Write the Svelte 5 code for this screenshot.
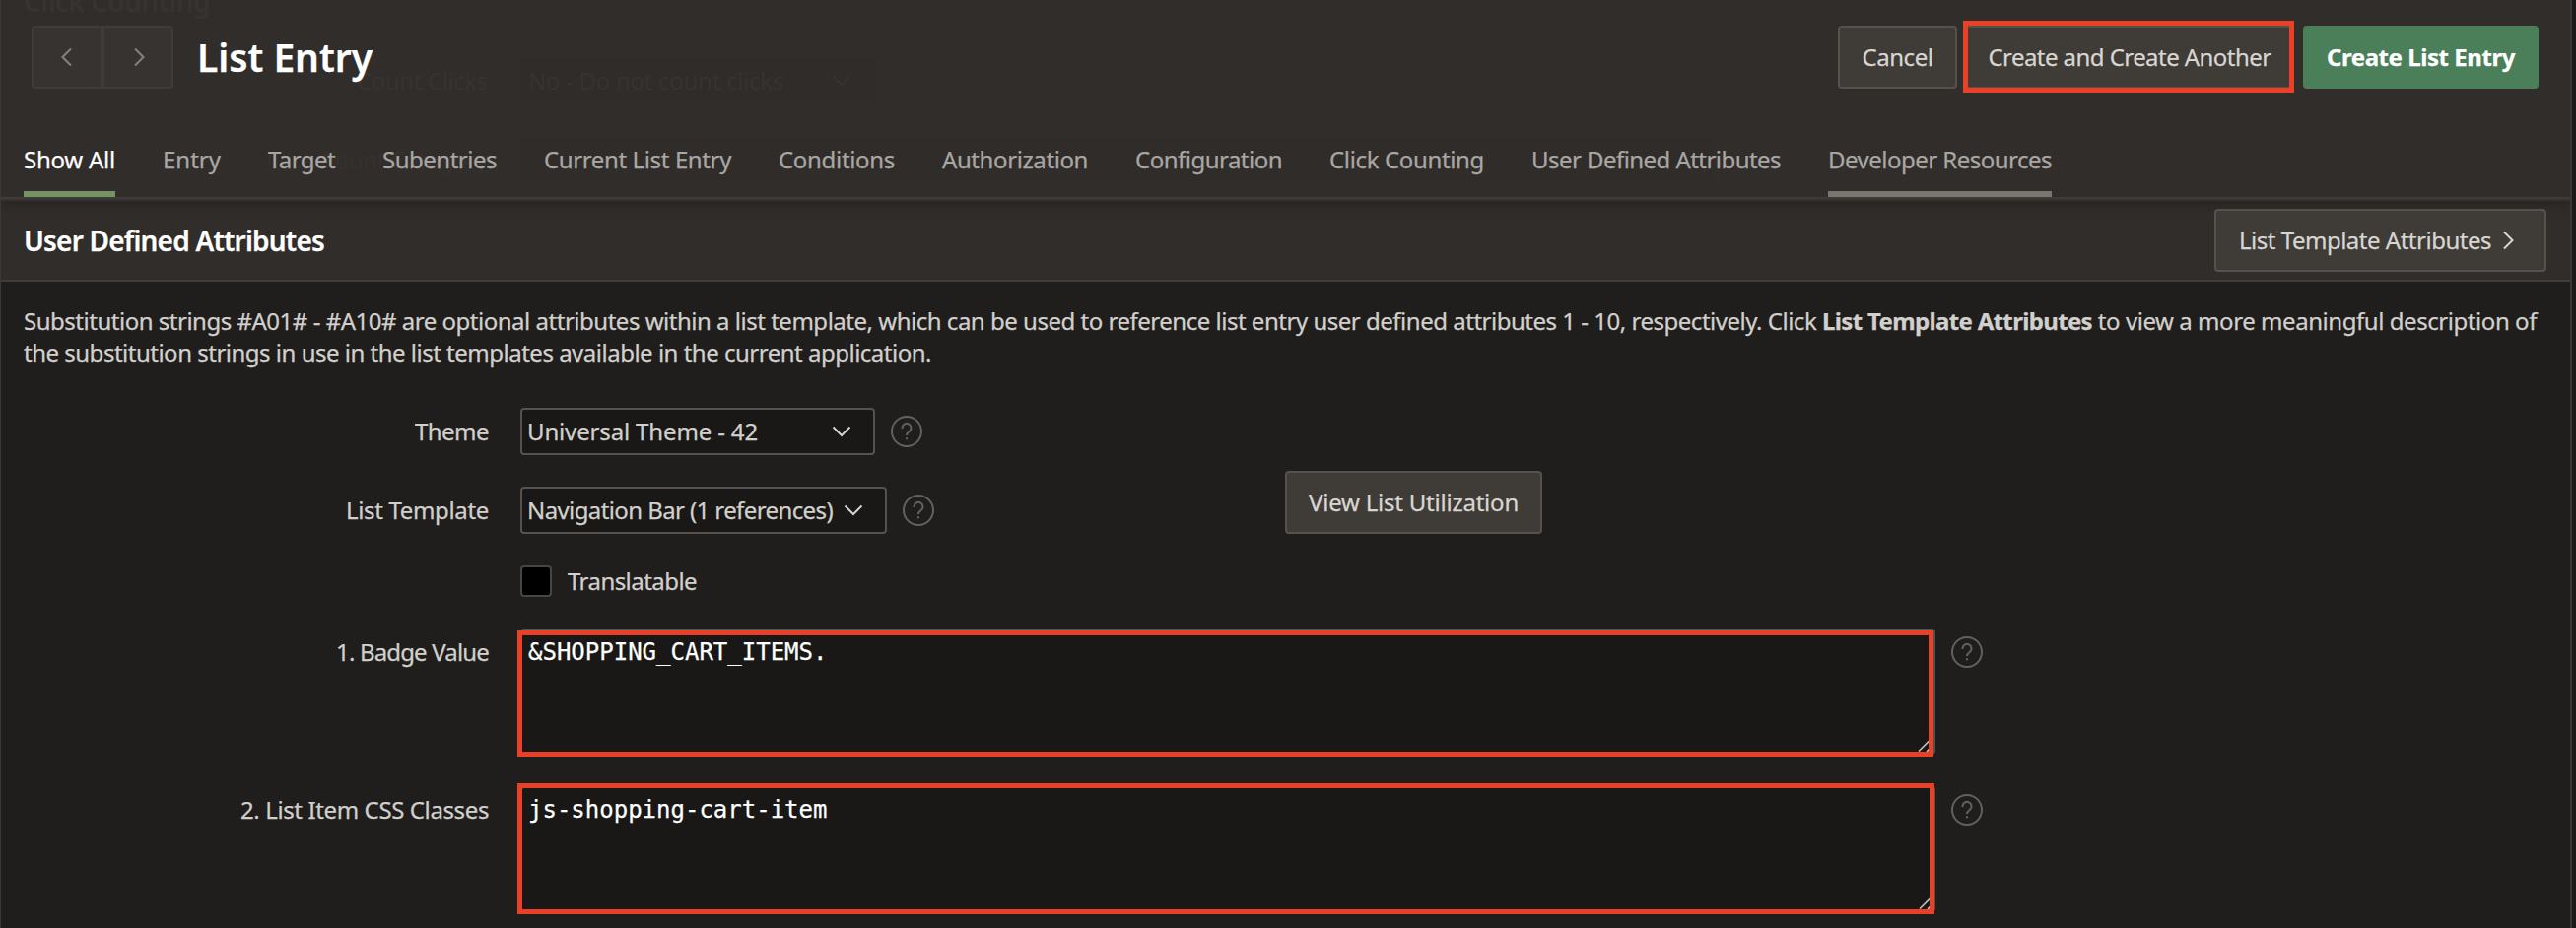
<script>
  const tabs = [
    ['Show All', 93], ['Entry', 59], ['Target', 68], ['Subentries', 116],
    ['Current List Entry', 190], ['Conditions', 118], ['Authorization', 148],
    ['Configuration', 149], ['Click Counting', 157],
    ['User Defined Attributes', 253], ['Developer Resources', 227]
  ];
  const areas = [
    ['1. Badge Value', 155, '&SHOPPING_CART_ITEMS.', 'first'],
    ['2. List Item CSS Classes', 252, 'js-shopping-cart-item', 'second']
  ];

  // Tracks a run of text so that it fills the given width.
  function fit(node, width) {
    const natural = node.getBoundingClientRect().width;
    node.style.letterSpacing = (width - natural) / node.textContent.length + 'px';
  }
</script>

{#snippet help()}
  <svg class="help" viewBox="0 0 32 32" width="32" height="32">
    <circle cx="16" cy="16" r="15" />
    <path d="M11.5 13v-.6a4.5 4.5 0 1 1 7.2 3.6c-1.800 1.300-2.700 2-2.700 4" />
    <path d="M16 22.300v1.900" />
  </svg>
{/snippet}
{#snippet chevron(kind)}
  <svg class="chev {kind}" viewBox="0 0 20 20" width="20" height="20">
    {#if kind === 'down'}<path d="M1.500 5.500 10 14l8.500-8.500" />
    {:else if kind === 'left'}<path d="M14 1.500 5.500 10l8.500 8.500" />
    {:else}<path d="M6 1.500 14.500 10 6 18.500" />{/if}
  </svg>
{/snippet}

<div class="page">
  <header>
    <div class="ghost" aria-hidden="true">
      <b class="g1" use:fit={189}>Click Counting</b>
      <span class="g2" use:fit={133}>Count Clicks</span>
      <div class="gbox g3"><span use:fit={259}>No - Do not count clicks</span>{@render chevron('down')}</div>
      <span class="g4" use:fit={225}>Click Count Category</span>
      <div class="gbox g5"></div>
    </div>
    <div class="bar">
      <div class="pager">
        <span>{@render chevron('left')}</span>
        <span>{@render chevron('right')}</span>
      </div>
      <h1><span use:fit={178}>List Entry</span></h1>
      <div class="actions">
        <button class="cancel"><span use:fit={72}>Cancel</span></button>
        <div class="marked"><button class="another"><span use:fit={287}>Create and Create Another</span></button></div>
        <button class="primary"><span use:fit={191}>Create List Entry</span></button>
      </div>
    </div>
    <nav>
      {#each tabs as [name, width], i}
        <a class:active={i === 0} class:hover={i === 10}><span use:fit={width}>{name}</span></a>
      {/each}
    </nav>
  </header>

  <section class="head">
    <h2><span use:fit={305}>User Defined Attributes</span></h2>
    <button class="lta"><span use:fit={256}>List Template Attributes</span>{@render chevron('right')}</button>
  </section>

  <p><span use:fit={1825}>{'Substitution strings #A01# - #A10# are optional attributes within a list template, which can be used to reference list entry user defined attributes 1 - 10, respectively. Click '}</span><b use:fit={274}>List Template Attributes</b><span use:fit={451}>{' to view a more meaningful description of'}</span><br /><span use:fit={921}>the substitution strings in use in the list templates available in the current application.</span></p>

  <div class="form">
    <div class="row">
      <label><span use:fit={75}>Theme</span></label>
      <div class="select theme"><span use:fit={234}>Universal Theme - 42</span>{@render chevron('down')}</div>
      {@render help()}
    </div>
    <div class="row second">
      <label><span use:fit={145}>List Template</span></label>
      <div class="select template"><span use:fit={310}>Navigation Bar (1 references)</span>{@render chevron('down')}</div>
      {@render help()}
      <button class="view"><span use:fit={213}>View List Utilization</span></button>
    </div>
    <div class="row check">
      <i></i><span use:fit={131}>Translatable</span>
    </div>
    {#each areas as [label, width, value, cls]}
      <div class="row area {cls}">
        <label><span use:fit={width}>{label}</span></label>
        <div class="field">
          <div class="text">{value}</div>
          <div class="mark">
            <svg viewBox="0 0 11 12" width="11" height="12"><path d="M0 0V0M1 11.500 11.500 1" /><path d="M9 12l3-3" /></svg>
          </div>
        </div>
        {@render help()}
      </div>
    {/each}
  </div>
</div>

<style>
  :global(body) { background: #1d1b1a; }
  .page {
    box-sizing: border-box; position: relative; width: 2610px; height: 942px; overflow: hidden;
    border-left: 1px solid #3b3936; border-right: 2px solid #3b3936;
    background: #201e1c; color: #d2d0cc;
    font: 24px/32px "Noto Sans", "Open Sans", sans-serif;
    -webkit-text-stroke: .25px currentColor;
  }
  span, b { white-space: pre; }
  header {
    position: relative; z-index: 1; box-sizing: border-box; height: 204px; background: #312d2a;
    border-bottom: 2px solid #36322f; box-shadow: 0 2px 14px rgba(0, 0, 0, .3);
    display: flex; flex-direction: column;
  }
  .bar { display: flex; padding: 26px 32px 0 31px; height: 64px; align-items: center; position: relative; }
  .pager { display: flex; box-sizing: border-box; width: 144px; height: 64px; border: 2px solid #403c39; border-radius: 4px; background: #373330; color: #85827e; }
  .pager span { flex: 1; display: flex; align-items: center; justify-content: center; }
  .pager span + span { border-left: 4px solid #403c39; }
  .pager .left { margin-left: -1px; }
  .pager .right { margin-left: 1px; }
  h1 { margin: 0 0 0 24px; font-size: 39px; line-height: 66px; font-weight: 600; color: #fff; }
  .actions { display: flex; align-items: center; margin-left: auto; }
  button {
    box-sizing: border-box; height: 64px; margin: 0; padding: 0; display: flex; align-items: center; justify-content: center;
    border: 2px solid #56514c; border-radius: 4px; background: #3f3b36; color: #d8d6d2;
    font: inherit; line-height: 32px;
  }
  .cancel { width: 121px; }
  .marked { position: relative; margin: 0 9px 0 8px; }
  .marked::after { content: ""; position: absolute; inset: -5px 0 -4px -2px; border: 5px solid #ea4025; }
  .another { width: 334px; }
  .primary { width: 239px; background: #4a7f59; border-color: #4a7f59; color: #fff; font-weight: 700; }
  nav { display: flex; gap: 48px; padding: 56px 0 0 23px; height: 54px; border-bottom: 2px solid #403d39; position: relative; color: #a9a7a4; }
  nav a { position: relative; height: 54px; line-height: 32px; }
  nav a span { display: block; }
  nav .active { color: #fff; box-shadow: inset 0 -6px #759466; }
  nav .hover { box-shadow: inset 0 -6px #797670; }
  .ghost { position: absolute; inset: 0; color: #373330; -webkit-text-stroke: 0; }
  .ghost > * { position: absolute; }
  .g1 { left: 23px; top: -15px; font-size: 28px; font-weight: 600; }
  .g2 { right: 2113px; top: 66px; }
  .g4 { right: 2113px; top: 146px; color: #35312e; }
  .gbox { box-sizing: border-box; left: 527px; height: 44px; border-radius: 4px; background: #302c29; display: flex; align-items: center; justify-content: space-between; padding: 0 24px 0 8px; }
  .g3 { top: 60px; width: 360px; }
  .g5 { top: 140px; width: 1210px; }
  .head {
    box-sizing: border-box; height: 82px; padding: 0 24px 0 23px; background: #312d2a;
    border-bottom: 2px solid #403d39; display: flex; align-items: center; justify-content: space-between;
  }
  h2 { margin: 0; font-size: 28px; font-weight: 600; color: #fff; }
  .lta { width: 337px; position: relative; z-index: 2; gap: 7px; justify-content: flex-start; padding-left: 23px; }
  p { margin: 24px 0 0 23px; height: 64px; }
  p b { font-weight: 700; }
  .form { padding-top: 40px; }
  .row { display: flex; align-items: center; height: 48px; }
  label { width: 495px; margin-right: 32px; text-align: right; flex: none; }
  label span, .check span { display: inline-block; }
  .select { box-sizing: border-box; height: 48px; border: 2px solid #56514c; border-radius: 4px; background: #191816; padding: 0 22px 0 5px; display: flex; align-items: center; justify-content: space-between; }
  .theme { width: 360px; }
  .template { width: 372px; }
  .help { margin-left: 16px; flex: none; fill: none; stroke: #63615e; stroke-width: 2; }
  .chev { flex: none; fill: none; stroke: currentColor; stroke-width: 2; }
  .second { margin-top: 32px; }
  .view { width: 261px; margin: -16px 0 0 356px; }
  .check { margin-top: 32px; height: 32px; padding-left: 527px; }
  .check i { box-sizing: border-box; width: 32px; height: 32px; margin-right: 16px; border: 2px solid #484643; border-radius: 4px; background: #000; }
  .area { margin-top: 32px; height: 128px; align-items: flex-start; }
  .area label { padding-top: 8px; }
  .area .help { margin-top: 8px; }
  .area .text { box-sizing: border-box; width: 1436px; height: 128px; border: 2px solid #56514c; border-radius: 4px; background: #191816; padding: 6px; color: #fff; font: 24px/32px "DejaVu Sans Mono", monospace; }
  .field { position: relative; }
  .mark { box-sizing: border-box; position: absolute; left: -3px; top: 2px; width: 1437px; height: 128px; border: 5px solid #ea4025; }
  .mark svg { position: absolute; right: 0; bottom: 0; fill: none; stroke: #c0c0c0; stroke-width: 1.6; }
  .area.second .mark { top: -3px; height: 133px; width: 1438px; }
</style>
